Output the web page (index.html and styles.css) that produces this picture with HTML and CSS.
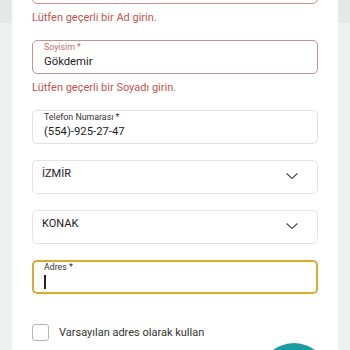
FILE: index.html
```html
<!DOCTYPE html>
<html lang="tr">
<head>
<meta charset="utf-8">
<link rel="stylesheet" href="styles.css">
</head>
<body>
<div class="card">
  <div class="form">
    <div class="group">
      <div class="field error"></div>
      <div class="err-msg">Lütfen geçerli bir Ad girin.</div>
    </div>
    <div class="group">
      <div class="field error">
        <span class="label">Soyisim *</span>
        <span class="value">Gökdemir</span>
      </div>
      <div class="err-msg">Lütfen geçerli bir Soyadı girin.</div>
    </div>
    <div class="field">
      <span class="label">Telefon Numarası *</span>
      <span class="value">(554)-925-27-47</span>
    </div>
    <div class="select">
      <span class="sel-text">İZMİR</span>
      <svg class="chev" width="12" height="6" viewBox="0 0 12 6"><path d="M0.6 0.5 L6 5.4 L11.4 0.5" fill="none" stroke="#444" stroke-width="1.1"/></svg>
    </div>
    <div class="select">
      <span class="sel-text">KONAK</span>
      <svg class="chev" width="12" height="6" viewBox="0 0 12 6"><path d="M0.6 0.5 L6 5.4 L11.4 0.5" fill="none" stroke="#444" stroke-width="1.1"/></svg>
    </div>
    <div class="field focus">
      <span class="label">Adres *</span>
      <span class="value"><span class="caret"></span></span>
    </div>
    <label class="check">
      <span class="box"></span>
      <span class="check-text">Varsayılan adres olarak kullan</span>
    </label>
    <div class="fab-row"><div class="fab"></div></div>
  </div>
</div>
</body>
</html>
```
FILE: styles.css
```css
* { box-sizing: border-box; }
html, body { margin: 0; padding: 0; }
body {
  width: 350px;
  height: 350px;
  overflow: hidden;
  background: linear-gradient(#e5e7e8 0 23px, #eef0f1 23px);
  font-family: Roboto, "Noto Sans", sans-serif;
  color: #222;
}
.card {
  margin: 0 12px;
  background: #fff;
  height: 350px;
  padding: 0 20px;
  overflow: hidden;
}
.form {
  margin-top: -30px;
  display: flex;
  flex-direction: column;
  gap: 16px;
}
.group { display: flex; flex-direction: column; }
.field {
  height: 34px;
  border: 1px solid #e2e2e2;
  border-radius: 5px;
  padding: 1px 11px 0;
  display: flex;
  flex-direction: column;
}
.label {
  font-size: 8.8px;
  line-height: 11px;
  color: #333;
}
.value {
  font-size: 11.3px;
  line-height: 14px;
  margin-top: 2px;
  color: #222;
}
.field.error { border-color: #c99190; }
.field.error .label { color: #c46e6b; }
.field.focus { border: 2px solid #d9aa34; padding: 0 10px 0; }
.caret {
  display: inline-block;
  width: 1.5px;
  height: 14px;
  background: #222;
  vertical-align: -3px;
}
.err-msg {
  font-size: 11px;
  line-height: 14px;
  color: #c2534f;
  margin-top: 7px;
  margin-bottom: -1px;
}
.select {
  height: 34px;
  border: 1px solid #e4e4e4;
  border-radius: 5px;
  padding: 0 19px 0 9px;
  display: flex;
  align-items: flex-start;
  justify-content: space-between;
}
.sel-text {
  font-size: 11px;
  line-height: 14px;
  margin-top: 6px;
}
.chev { margin-top: 12px; }
.check {
  margin-top: 14px;
  display: flex;
  align-items: center;
  gap: 10px;
}
.box {
  width: 17px;
  height: 17px;
  border: 1px solid #b5b5b5;
  border-radius: 3px;
}
.check-text { font-size: 11px; color: #333; }
.fab-row { display: flex; justify-content: flex-end; margin-top: -14px; }
.fab {
  width: 70px;
  height: 70px;
  border-radius: 50%;
  background: #1a9da1;
  margin-right: -11px;
  flex: none;
}
```
